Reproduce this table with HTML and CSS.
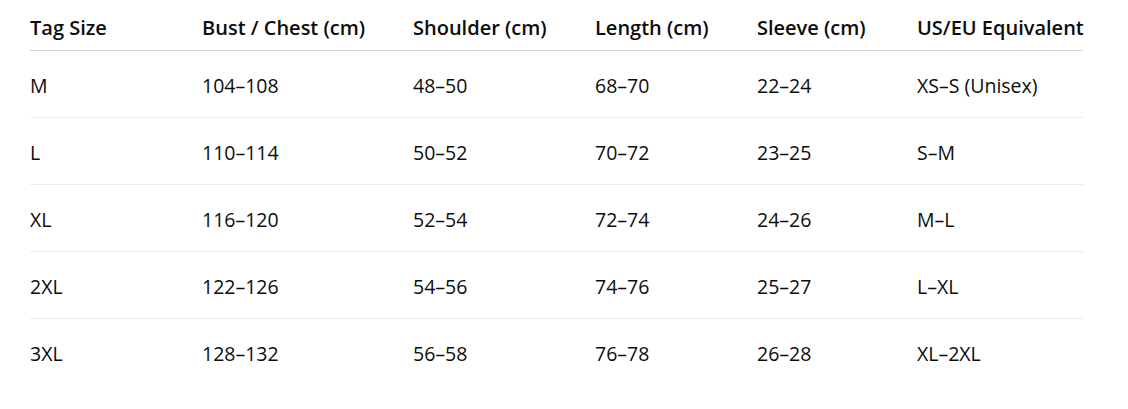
FILE: index.html
```html
<!DOCTYPE html>
<html lang="en">
<head>
<meta charset="utf-8">
<title>Size Chart</title>
<link rel="stylesheet" href="styles.css">
</head>
<body class="page">
<div class="wrap">
<table class="size-table">
  <colgroup>
    <col class="c1"><col class="c2"><col class="c3"><col class="c4"><col class="c5"><col class="c6">
  </colgroup>
  <thead>
    <tr class="head-row">
      <th>Tag Size</th><th>Bust / Chest (cm)</th><th>Shoulder (cm)</th><th>Length (cm)</th><th>Sleeve (cm)</th><th>US/EU Equivalent</th>
    </tr>
  </thead>
  <tbody>
    <tr class="row"><td>M</td><td>104–108</td><td>48–50</td><td>68–70</td><td>22–24</td><td>XS–S (Unisex)</td></tr>
    <tr class="row"><td>L</td><td>110–114</td><td>50–52</td><td>70–72</td><td>23–25</td><td>S–M</td></tr>
    <tr class="row"><td>XL</td><td>116–120</td><td>52–54</td><td>72–74</td><td>24–26</td><td>M–L</td></tr>
    <tr class="row"><td>2XL</td><td>122–126</td><td>54–56</td><td>74–76</td><td>25–27</td><td>L–XL</td></tr>
    <tr class="row"><td>3XL</td><td>128–132</td><td>56–58</td><td>76–78</td><td>26–28</td><td>XL–2XL</td></tr>
  </tbody>
</table>
</div>
</body>
</html>
```

FILE: styles.css
```css
html, body {
  margin: 0;
  padding: 0;
  background: #ffffff;
}
.page {
  font-family: "Open Sans", "Noto Sans", "Liberation Sans", sans-serif;
  color: #0d0d0d;
  font-size: 19.5px;
}
.wrap {
  padding-left: 30px;
  width: 1053px;
}
.size-table {
  width: 1053px;
  table-layout: fixed;
  border-collapse: collapse;
}
.c1 { width: 172px; }
.c2 { width: 211px; }
.c3 { width: 182px; }
.c4 { width: 162px; }
.c5 { width: 160px; }
.c6 { width: 166px; }
.size-table th,
.size-table td {
  text-align: left;
  line-height: 28px;
  padding: 0;
  white-space: nowrap;
}
.head-row th {
  font-size: 20px;
  font-weight: 600;
  padding-top: 14px;
  padding-bottom: 8px;
  border-bottom: 1px solid #d4d4d4;
}
.row td {
  font-weight: 400;
  padding-top: 21px;
  padding-bottom: 17px;
  border-bottom: 1px solid #ececec;
}
.row:last-child td {
  border-bottom: none;
}
```
